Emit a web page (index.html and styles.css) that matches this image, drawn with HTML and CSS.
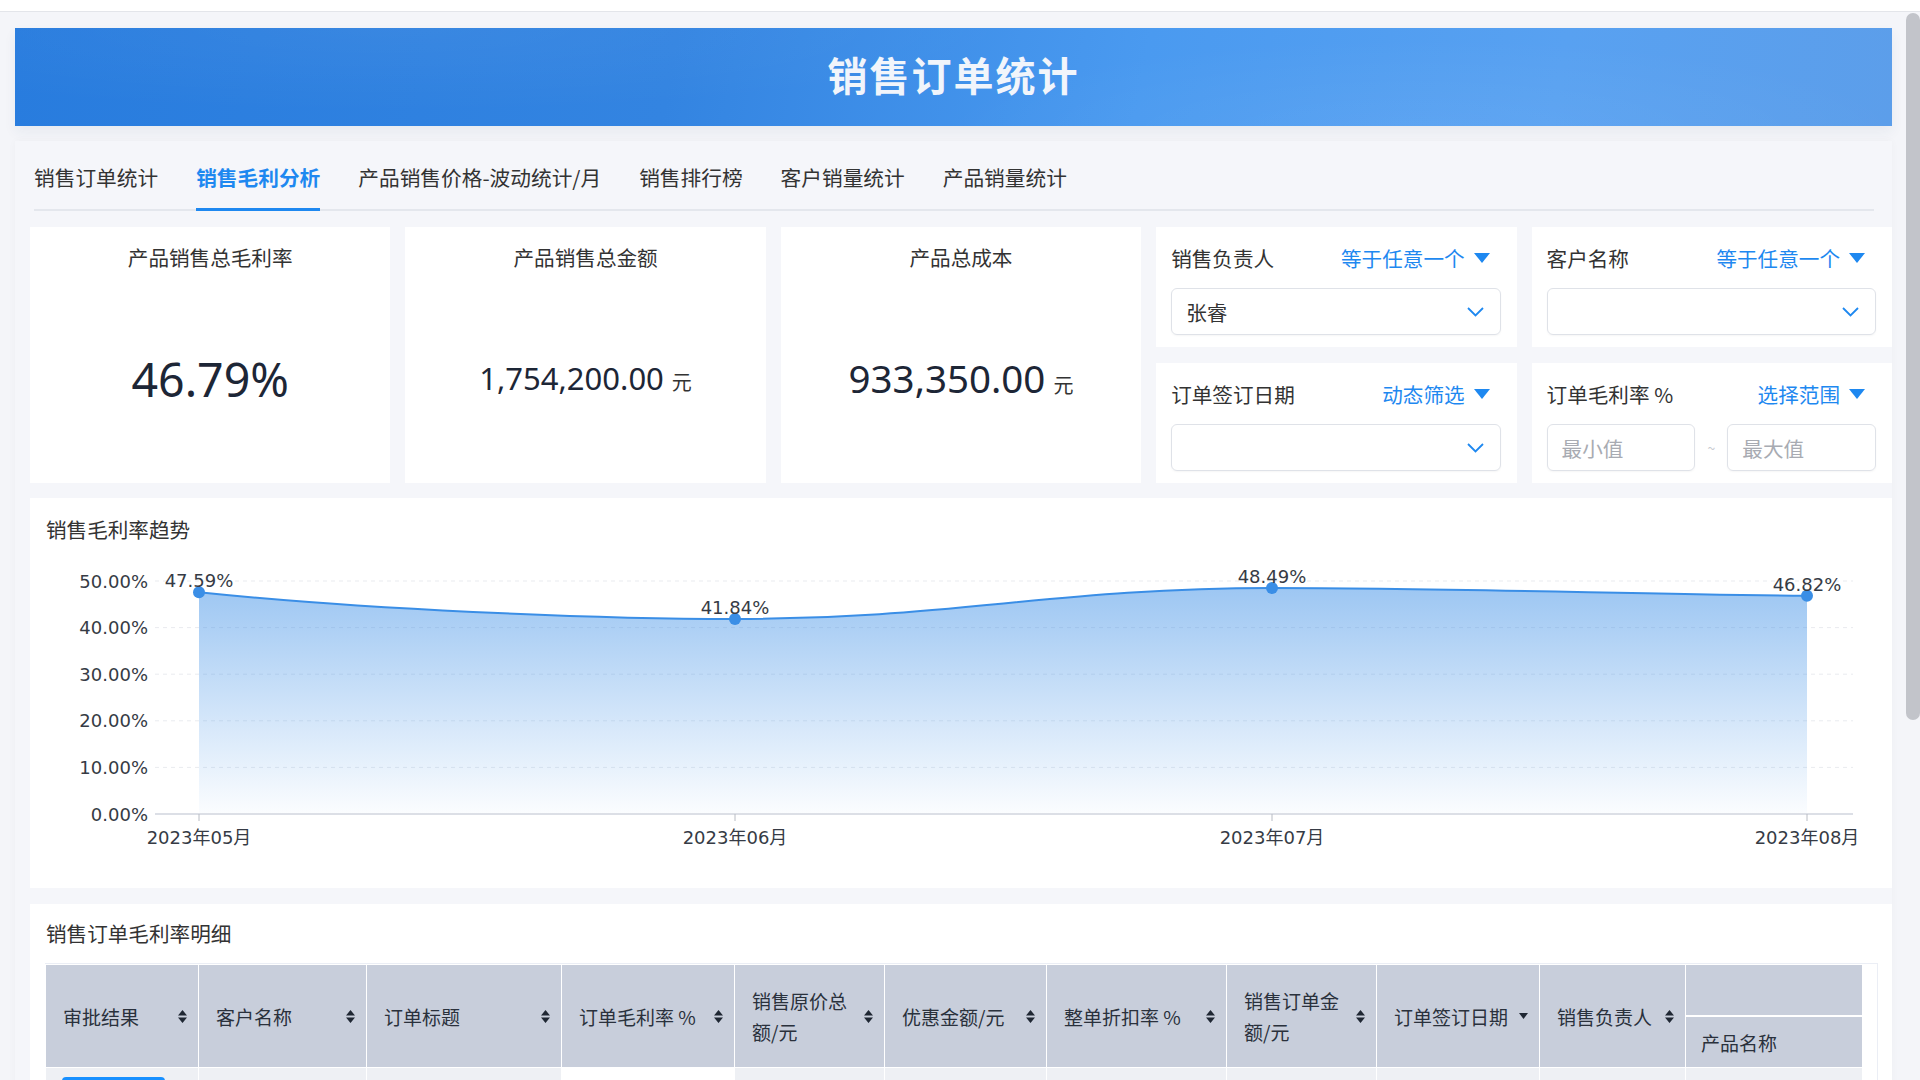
FILE: index.html
```html
<!DOCTYPE html>
<html>
  <head>
    <meta charset="utf-8">
    <title>销售订单统计</title>
    <link rel="stylesheet" href="styles.css">
  </head>
  <body>
    <div class="topbar"></div>
    <div class="layout">
      <main class="main">
        <header class="banner"><h1>销售订单统计</h1></header>

        <section class="panel">
          <nav class="tabs">
            <span class="tab">销售订单统计</span>
            <span class="tab active">销售毛利分析</span>
            <span class="tab">产品销售价格-波动统计/月</span>
            <span class="tab">销售排行榜</span>
            <span class="tab">客户销量统计</span>
            <span class="tab">产品销量统计</span>
          </nav>

          <div class="overview">
            <div class="stat">
              <div class="stat-title">产品销售总毛利率</div>
              <div class="stat-value"><span class="amount"><span class="num big">46.79%</span></span></div>
            </div>
            <div class="stat">
              <div class="stat-title">产品销售总金额</div>
              <div class="stat-value"><span class="amount"><span class="num small">1,754,200.00</span><span class="unit">元</span></span></div>
            </div>
            <div class="stat">
              <div class="stat-title">产品总成本</div>
              <div class="stat-value"><span class="amount"><span class="num mid">933,350.00</span><span class="unit">元</span></span></div>
            </div>

            <div class="filter">
              <div class="filter-head">
                <span>销售负责人</span>
                <span class="mode">等于任意一个
                  <svg width="16" height="10" viewBox="0 0 16 10"><path d="M0 0H16L8 10Z" fill="#1e88f0"/></svg>
                </span>
              </div>
              <div class="select">
                <span>张睿</span>
                <svg class="chev" width="17" height="10" viewBox="0 0 17 10"><path d="M1 1L8.5 8.5L16 1" fill="none" stroke="#1e88f0" stroke-width="1.8"/></svg>
              </div>
            </div>
            <div class="filter">
              <div class="filter-head">
                <span>客户名称</span>
                <span class="mode">等于任意一个
                  <svg width="16" height="10" viewBox="0 0 16 10"><path d="M0 0H16L8 10Z" fill="#1e88f0"/></svg>
                </span>
              </div>
              <div class="select">
                <span></span>
                <svg class="chev" width="17" height="10" viewBox="0 0 17 10"><path d="M1 1L8.5 8.5L16 1" fill="none" stroke="#1e88f0" stroke-width="1.8"/></svg>
              </div>
            </div>
            <div class="filter">
              <div class="filter-head">
                <span>订单签订日期</span>
                <span class="mode">动态筛选
                  <svg width="16" height="10" viewBox="0 0 16 10"><path d="M0 0H16L8 10Z" fill="#1e88f0"/></svg>
                </span>
              </div>
              <div class="select">
                <span></span>
                <svg class="chev" width="17" height="10" viewBox="0 0 17 10"><path d="M1 1L8.5 8.5L16 1" fill="none" stroke="#1e88f0" stroke-width="1.8"/></svg>
              </div>
            </div>
            <div class="filter">
              <div class="filter-head">
                <span>订单毛利率 %</span>
                <span class="mode">选择范围
                  <svg width="16" height="10" viewBox="0 0 16 10"><path d="M0 0H16L8 10Z" fill="#1e88f0"/></svg>
                </span>
              </div>
              <div class="range">
                <div class="select range-input"><span class="placeholder">最小值</span></div>
                <span class="tilde">~</span>
                <div class="select range-input"><span class="placeholder">最大值</span></div>
              </div>
            </div>
          </div>

          <div class="card chart-card">
            <div class="card-title">销售毛利率趋势</div>
            <svg class="chart" viewBox="0 0 1862 330" width="1862" height="330">
              <defs>
                <linearGradient id="area" x1="0" y1="0" x2="0" y2="1">
                  <stop offset="0" stop-color="#3b8ee6" stop-opacity="0.5"/>
                  <stop offset="1" stop-color="#3b8ee6" stop-opacity="0.02"/>
                </linearGradient>
              </defs>
              <!-- grid -->
              <g class="grid">
                <line x1="125" y1="30" x2="1823" y2="30"/>
                <line x1="125" y1="76.6" x2="1823" y2="76.6"/>
                <line x1="125" y1="123.2" x2="1823" y2="123.2"/>
                <line x1="125" y1="169.8" x2="1823" y2="169.8"/>
                <line x1="125" y1="216.4" x2="1823" y2="216.4"/>
              </g>
              <g class="ylabels">
                <text x="118" y="30">50.00%</text>
                <text x="118" y="76.6">40.00%</text>
                <text x="118" y="123.2">30.00%</text>
                <text x="118" y="169.8">20.00%</text>
                <text x="118" y="216.4">10.00%</text>
                <text x="118" y="263">0.00%</text>
              </g>
              <path class="area" d="M169,41.2 C330,58 560,68 705,68 C920,68 1027,37 1242,37 C1420,37 1600,43 1777,44.8 L1777,263 L169,263 Z"/>
              <line class="axis" x1="125" y1="263" x2="1823" y2="263"/>
              <g class="ticks">
                <line x1="169" y1="263" x2="169" y2="270"/>
                <line x1="705" y1="263" x2="705" y2="270"/>
                <line x1="1242" y1="263" x2="1242" y2="270"/>
                <line x1="1777" y1="263" x2="1777" y2="270"/>
              </g>
              <path class="line" d="M169,41.2 C330,58 560,68 705,68 C920,68 1027,37 1242,37 C1420,37 1600,43 1777,44.8"/>
              <g class="dots">
                <circle cx="169" cy="41.2" r="6"/>
                <circle cx="705" cy="68" r="6"/>
                <circle cx="1242" cy="37" r="6"/>
                <circle cx="1777" cy="44.8" r="6"/>
              </g>
              <g class="vlabels">
                <text x="169" y="29">47.59%</text>
                <text x="705" y="56">41.84%</text>
                <text x="1242" y="25">48.49%</text>
                <text x="1777" y="33">46.82%</text>
              </g>
              <g class="xlabels">
                <text x="169" y="286">2023年05月</text>
                <text x="705" y="286">2023年06月</text>
                <text x="1242" y="286">2023年07月</text>
                <text x="1777" y="286">2023年08月</text>
              </g>
            </svg>
          </div>

          <div class="card table-card">
            <div class="card-title">销售订单毛利率明细</div>
            <div class="table-wrap">
              <table class="detail">
                <colgroup>
                  <col style="width:153px"><col style="width:168px"><col style="width:195px">
                  <col style="width:173px"><col style="width:150px"><col style="width:162px">
                  <col style="width:180px"><col style="width:150px"><col style="width:163px">
                  <col style="width:146px"><col style="width:177px">
                </colgroup>
                <thead>
                  <tr>
                    <th rowspan="2"><div class="th"><span>审批结果</span><svg class="sort" width="9" height="13" viewBox="0 0 9 13"><path d="M4.5 0L9 5.5H0Z M0 7.5H9L4.5 13Z"/></svg></div></th>
                    <th rowspan="2"><div class="th"><span>客户名称</span><svg class="sort" width="9" height="13" viewBox="0 0 9 13"><path d="M4.5 0L9 5.5H0Z M0 7.5H9L4.5 13Z"/></svg></div></th>
                    <th rowspan="2"><div class="th"><span>订单标题</span><svg class="sort" width="9" height="13" viewBox="0 0 9 13"><path d="M4.5 0L9 5.5H0Z M0 7.5H9L4.5 13Z"/></svg></div></th>
                    <th rowspan="2"><div class="th"><span>订单毛利率 %</span><svg class="sort" width="9" height="13" viewBox="0 0 9 13"><path d="M4.5 0L9 5.5H0Z M0 7.5H9L4.5 13Z"/></svg></div></th>
                    <th rowspan="2"><div class="th"><span>销售原价总额/元</span><svg class="sort" width="9" height="13" viewBox="0 0 9 13"><path d="M4.5 0L9 5.5H0Z M0 7.5H9L4.5 13Z"/></svg></div></th>
                    <th rowspan="2"><div class="th"><span>优惠金额/元</span><svg class="sort" width="9" height="13" viewBox="0 0 9 13"><path d="M4.5 0L9 5.5H0Z M0 7.5H9L4.5 13Z"/></svg></div></th>
                    <th rowspan="2"><div class="th"><span>整单折扣率 %</span><svg class="sort" width="9" height="13" viewBox="0 0 9 13"><path d="M4.5 0L9 5.5H0Z M0 7.5H9L4.5 13Z"/></svg></div></th>
                    <th rowspan="2"><div class="th"><span>销售订单金额/元</span><svg class="sort" width="9" height="13" viewBox="0 0 9 13"><path d="M4.5 0L9 5.5H0Z M0 7.5H9L4.5 13Z"/></svg></div></th>
                    <th rowspan="2"><div class="th"><span>订单签订日期</span><svg class="sort" width="9" height="7" viewBox="0 0 9 7"><path d="M0 0H9L4.5 6Z"/></svg></div></th>
                    <th rowspan="2"><div class="th"><span>销售负责人</span><svg class="sort" width="9" height="13" viewBox="0 0 9 13"><path d="M4.5 0L9 5.5H0Z M0 7.5H9L4.5 13Z"/></svg></div></th>
                    <th class="group"></th>
                  </tr>
                  <tr>
                    <th class="sub">产品名称</th>
                  </tr>
                </thead>
                <tbody>
                  <tr>
                    <td><span class="btn">已审批</span></td>
                    <td></td><td></td><td class="plain"></td><td></td><td></td>
                    <td></td><td></td><td></td><td></td><td></td>
                  </tr>
                </tbody>
              </table>
            </div>
          </div>
        </section>
      </main>
      <div class="scrollbar"><div class="thumb"></div></div>
    </div>
  </body>
</html>
```

FILE: styles.css
```css
body {
  margin: 0;
  height: 1080px;
  overflow: hidden;
  background: #f4f5f9;
  font-family: "Noto Sans CJK SC", "Noto Sans", sans-serif;
  color: #333;
}

.topbar {
  height: 11px;
  background: #fff;
  border-bottom: 1px solid #e3e5ea;
}

.layout {
  display: flex;
  height: 1068px;
}
.main {
  flex: 1;
  min-width: 0;
  padding: 16px 14px 0 15px;
  overflow: hidden;
}
.scrollbar {
  width: 14px;
  padding-top: 1px;
}
.scrollbar .thumb {
  height: 707px;
  background: #c2c4ca;
  border-radius: 7px;
}

/* banner */
.banner {
  height: 98px;
  box-sizing: border-box;
  padding-bottom: 6px;
  display: flex;
  align-items: center;
  justify-content: center;
  background:
    radial-gradient(ellipse 900px 120px at 20% 0%, rgba(255,255,255,0.05), rgba(255,255,255,0) 70%),
    radial-gradient(ellipse 700px 140px at 75% 110%, rgba(255,255,255,0.06), rgba(255,255,255,0) 70%),
    linear-gradient(100deg, #287cde 0%, #3384e1 35%, #4a9af0 60%, #58a1f1 82%, #5c9eea 100%);
  box-shadow: 0 6px 12px rgba(40, 60, 100, 0.06);
}
.banner h1 {
  margin: 0;
  font-size: 40px;
  letter-spacing: 2px;
  font-weight: bold;
  color: #f1f5fb;
}

/* panel */
.panel {
  margin-top: 15px;
  padding: 0 0 20px 15px;
  background: #f5f6fa;
  box-shadow: 0 0 8px rgba(0, 0, 0, 0.03);
}

.tabs {
  display: flex;
  gap: 38px;
  margin: 0 18px 0 4px;
  padding-top: 22px;
  border-bottom: 2px solid #e4e7ed;
}
.tab {
  font-size: 20.7px;
  line-height: 28px;
  padding-bottom: 17px;
  margin-bottom: -2px;
  border-bottom: 3px solid transparent;
  color: #333;
  white-space: nowrap;
}
.tab.active {
  color: #1e88f0;
  font-weight: bold;
  border-bottom-color: #1e88f0;
}

/* overview grid */
.overview {
  display: grid;
  grid-template-columns: repeat(5, 1fr);
  grid-template-rows: 120px 120px;
  gap: 16px 15px;
  margin-top: 16px;
}
.stat {
  grid-row: span 2;
  background: #fff;
  display: flex;
  flex-direction: column;
  align-items: center;
  padding-top: 16px;
}
.stat-title {
  font-size: 20.6px;
  line-height: 28px;
}
.stat-value {
  flex: 1;
  display: flex;
  align-items: center;
  justify-content: center;
  padding-top: 4px;
  color: #1d2636;
}
.amount {
  display: flex;
  align-items: baseline;
}
.num {
  font-family: "Noto Sans", sans-serif;
  line-height: 1;
}
.num.big { font-size: 46.5px; }
.num.mid { font-size: 38.5px; }
.num.small { font-size: 31px; }
.unit {
  font-size: 20px;
  margin-left: 8px;
  color: #333;
}

.filter {
  background: #fff;
  padding: 17px 16px 12px 15px;
  display: flex;
  flex-direction: column;
}
.filter-head {
  display: flex;
  justify-content: space-between;
  align-items: center;
  font-size: 20.6px;
  line-height: 28px;
}
.mode {
  color: #1e88f0;
  display: flex;
  align-items: center;
  gap: 9px;
  margin-right: 11px;
}
.select {
  margin-top: 16px;
  height: 47px;
  box-sizing: border-box;
  border: 1px solid #dfe2e8;
  border-radius: 6px;
  box-shadow: 0 1px 2px rgba(0, 0, 0, 0.04);
  display: flex;
  align-items: center;
  justify-content: space-between;
  padding: 0 16px 0 14px;
  font-size: 20.6px;
}
.range {
  display: flex;
  align-items: center;
  margin-top: 16px;
}
.range .select {
  margin-top: 0;
  flex: 1;
}
.placeholder {
  color: #a8abb2;
}
.tilde {
  width: 32px;
  text-align: center;
  color: #c8cbd1;
  font-size: 14px;
}

/* cards */
.card {
  background: #fff;
}
.card-title {
  font-size: 20.6px;
  line-height: 26px;
  padding: 18px 16px 0;
}
.chart-card {
  margin-top: 15px;
  height: 390px;
}
.chart {
  display: block;
  margin-top: 9px;
  font-family: "DejaVu Sans", "Noto Sans CJK SC", sans-serif;
}
.chart .grid line {
  stroke: #e9ebef;
  stroke-dasharray: 4 4;
}
.chart .axis {
  stroke: #dcdfe6;
  stroke-width: 2;
}
.chart .ticks line {
  stroke: #b8bcc4;
}
.chart .area {
  fill: url(#area);
}
.chart .line {
  fill: none;
  stroke: #3a8ee6;
  stroke-width: 2;
}
.chart .dots circle {
  fill: #3a8ee6;
}
.chart text {
  font-size: 18px;
  fill: #363b45;
  dominant-baseline: central;
}
.chart .ylabels text {
  text-anchor: end;
}
.chart .vlabels text,
.chart .xlabels text {
  text-anchor: middle;
}

/* table */
.table-card {
  margin-top: 16px;
  height: 300px;
}
.table-card .card-title {
  padding-top: 16px;
}
.table-wrap {
  margin: 17px 14px 0 15px;
  padding-right: 14px;
  border-top: 1px solid #ebeef5;
  border-right: 1px solid #ebeef5;
}
.detail {
  width: 1818px;
  table-layout: fixed;
  border-collapse: collapse;
}
.detail th {
  background: #c8cedb;
  border: 1px solid #fff;
  padding: 0 11px 0 17px;
  font-size: 19px;
  line-height: 31px;
  font-weight: normal;
  text-align: left;
  color: #2a313c;
}
.detail th.group {
  height: 50px;
  border-bottom: 2px solid #fff;
}
.detail th.sub {
  height: 50px;
  padding-left: 15px;
}
.th {
  display: flex;
  align-items: center;
  justify-content: space-between;
  gap: 4px;
}
.sort {
  flex: none;
  fill: #1f2733;
}
.detail td {
  height: 60px;
  background: #eef0f4;
  border: 1px solid #fff;
  padding: 9px 16px;
  vertical-align: top;
}
.detail td.plain {
  background: #fff;
}
.btn {
  display: inline-block;
  width: 103px;
  height: 34px;
  border-radius: 4px;
  background: #1890ff;
  color: #fff;
  font-size: 16px;
  line-height: 34px;
  text-align: center;
}
```
